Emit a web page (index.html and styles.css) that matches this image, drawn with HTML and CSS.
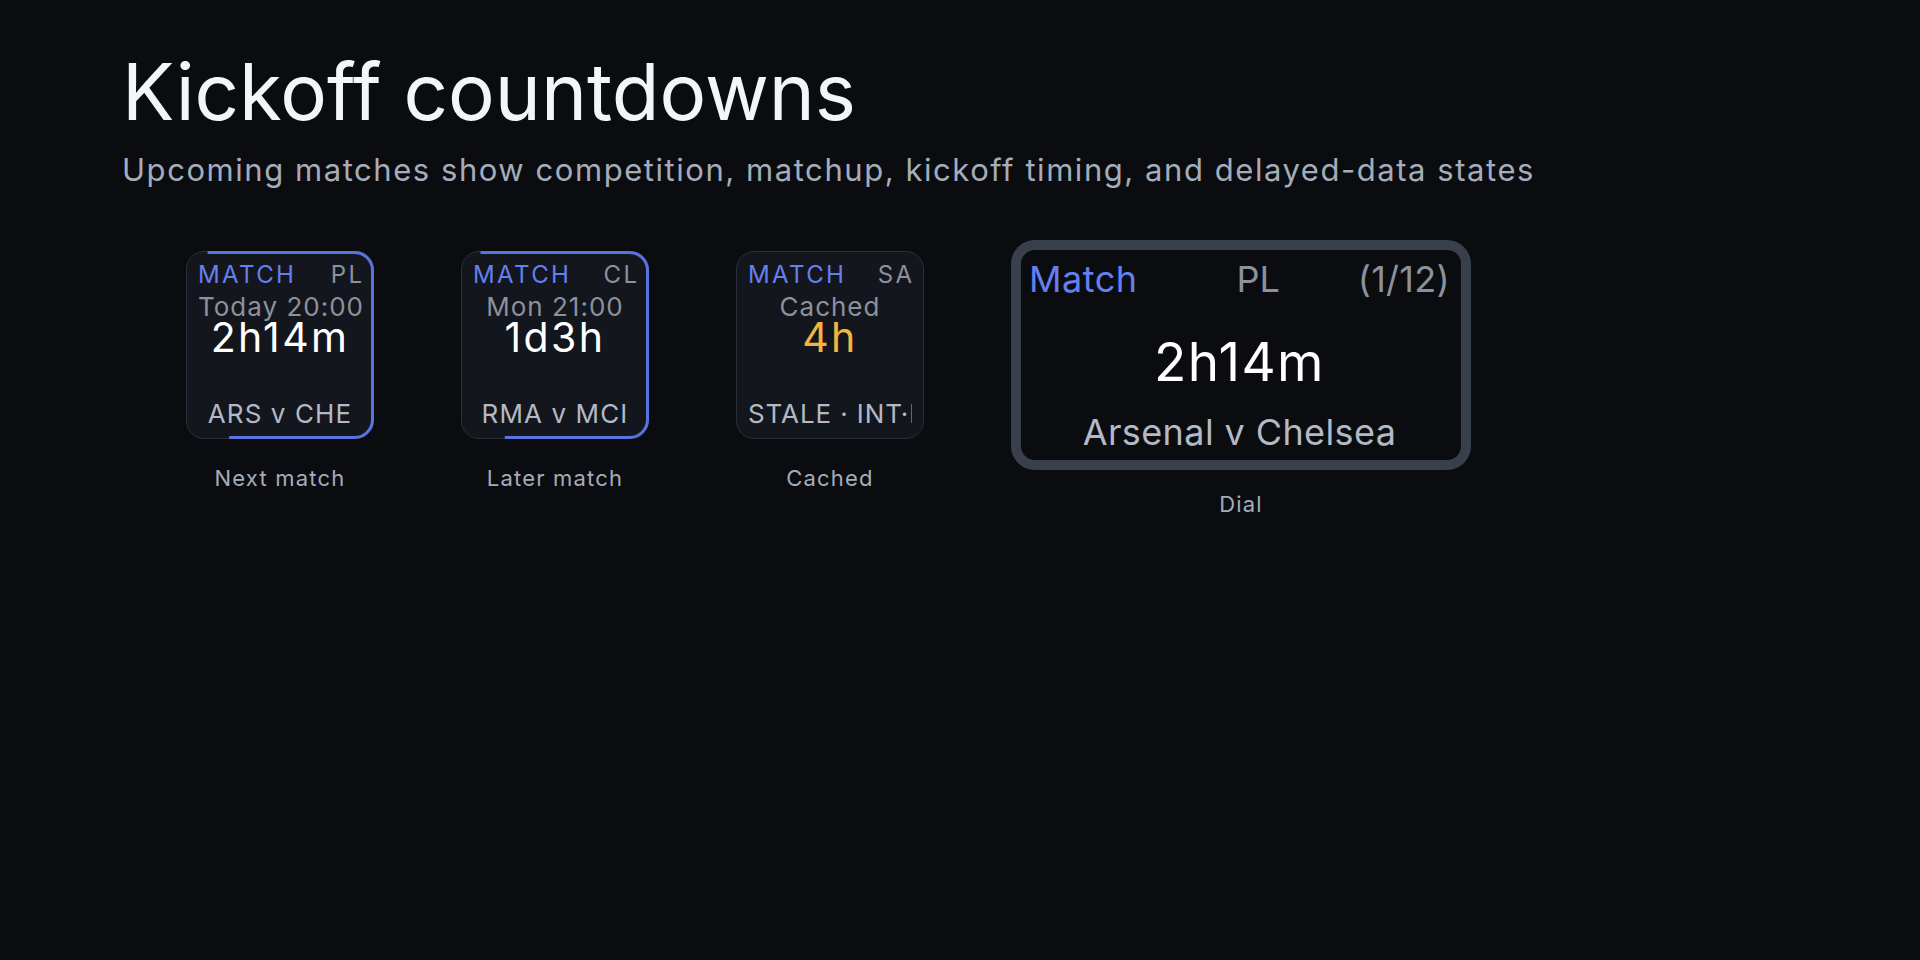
FILE: index.html
```html
<!DOCTYPE html>
<html lang="en">
<head>
    <meta charset="UTF-8">
    <meta name="viewport" content="width=device-width, initial-scale=1.0">
    <title>Kickoff countdowns</title>
    <link rel="stylesheet" href="styles.css">
</head>
<body>
    <main class="page">
        <header class="intro">
            <h1 class="intro-title">Kickoff countdowns</h1>
            <p class="intro-subtitle">Upcoming matches show competition, matchup, kickoff timing, and delayed-data states</p>
        </header>

        <section class="gallery">
            <!-- Tile: next match -->
            <figure class="sample sample-tile">
                <div class="tile">
                    <svg class="tile-progress" viewBox="0 0 188 188">
                        <rect x="1.5" y="1.5" width="185" height="185" rx="18" pathLength="100" stroke-dasharray="67.4 100" stroke-dashoffset="-0.3"/>
                    </svg>
                    <div class="tile-head">
                        <span class="tile-kind">MATCH</span>
                        <span class="tile-comp">PL</span>
                    </div>
                    <div class="tile-when">Today 20:00</div>
                    <div class="tile-count">2h14m</div>
                    <div class="tile-teams">ARS v CHE</div>
                </div>
                <figcaption class="sample-label">Next match</figcaption>
            </figure>

            <!-- Tile: later match -->
            <figure class="sample sample-tile">
                <div class="tile">
                    <svg class="tile-progress" viewBox="0 0 188 188">
                        <rect x="1.5" y="1.5" width="185" height="185" rx="18" pathLength="100" stroke-dasharray="67.6 100" stroke-dashoffset="0"/>
                    </svg>
                    <div class="tile-head">
                        <span class="tile-kind">MATCH</span>
                        <span class="tile-comp">CL</span>
                    </div>
                    <div class="tile-when">Mon 21:00</div>
                    <div class="tile-count">1d3h</div>
                    <div class="tile-teams">RMA v MCI</div>
                </div>
                <figcaption class="sample-label">Later match</figcaption>
            </figure>

            <!-- Tile: cached data -->
            <figure class="sample sample-tile">
                <div class="tile">
                    <div class="tile-head">
                        <span class="tile-kind">MATCH</span>
                        <span class="tile-comp">SA</span>
                    </div>
                    <div class="tile-when">Cached</div>
                    <div class="tile-count tile-count-stale">4h</div>
                    <div class="tile-teams tile-teams-clipped">STALE · INT·MIL</div>
                </div>
                <figcaption class="sample-label">Cached</figcaption>
            </figure>

            <!-- Dial -->
            <figure class="sample sample-dial">
                <div class="dial">
                    <div class="dial-head">
                        <span class="dial-kind">Match</span>
                        <span class="dial-comp">PL</span>
                        <span class="dial-page">(1/12)</span>
                    </div>
                    <div class="dial-count">2h14m</div>
                    <div class="dial-teams">Arsenal v Chelsea</div>
                </div>
                <figcaption class="sample-label">Dial</figcaption>
            </figure>
        </section>
    </main>
</body>
</html>
```

FILE: styles.css
```css
/* Base styles */
:root {
    --color-background: #0b0c10;
    --color-tile: #14161d;
    --color-tile-border: #2b2f39;
    --color-dial-border: #3a404b;
    --color-text-primary: #f4f5f7;
    --color-text-secondary: #a5acba;
    --color-text-muted: #8b919d;
    --color-text-teams: #b3b9c5;
    --color-accent: #6480f0;
    --color-progress: #5a73e2;
    --color-stale: #f2b53f;
    --font-primary: 'Inter', 'Noto Sans', 'Liberation Sans', sans-serif;
}

* {
    margin: 0;
    padding: 0;
    box-sizing: border-box;
}

body {
    font-family: var(--font-primary);
    background: var(--color-background);
    color: var(--color-text-primary);
    min-height: 100vh;
}

.page {
    padding: 53px 0 0 122px;
}

/* Heading */
.intro-title {
    font-size: 78px;
    line-height: 78px;
    font-weight: 400;
    color: var(--color-text-primary);
}

.intro-subtitle {
    margin-top: 23px;
    font-size: 31px;
    line-height: 31px;
    letter-spacing: 1.55px;
    color: var(--color-text-secondary);
}

/* Samples row */
.gallery {
    display: flex;
    align-items: flex-start;
    gap: 87px;
    margin-top: 55px;
    padding-left: 64px;
}

.sample {
    display: flex;
    flex-direction: column;
    align-items: center;
}

.sample-tile {
    padding-top: 11px;
}

.sample-label {
    font-size: 22px;
    line-height: 22px;
    letter-spacing: 1.2px;
    color: var(--color-text-secondary);
}

.sample-tile .sample-label {
    margin-top: 28px;
}

.sample-dial .sample-label {
    margin-top: 23px;
}

/* Small tile */
.tile {
    position: relative;
    width: 188px;
    height: 188px;
    display: flex;
    flex-direction: column;
    padding: 11px 11px 8px;
    background: var(--color-tile);
    border: 1px solid var(--color-tile-border);
    border-radius: 18px;
    text-align: center;
}

.tile-progress {
    position: absolute;
    top: -1px;
    left: -1px;
    width: 188px;
    height: 188px;
    fill: none;
    stroke: var(--color-progress);
    stroke-width: 3;
    pointer-events: none;
}

.tile-head {
    display: flex;
    justify-content: space-between;
    font-size: 24px;
    line-height: 24px;
    letter-spacing: 2.4px;
}

.tile-kind {
    color: var(--color-accent);
}

.tile-comp {
    margin-right: -2.4px;
    color: var(--color-text-muted);
}

.tile-when {
    margin-top: 8px;
    font-size: 26px;
    line-height: 24px;
    letter-spacing: 1px;
    color: var(--color-text-muted);
    white-space: nowrap;
}

.tile-count {
    font-size: 41px;
    line-height: 36px;
    letter-spacing: 2.4px;
    color: #ffffff;
}

.tile-count-stale {
    color: var(--color-stale);
}

.tile-teams {
    margin-top: auto;
    font-size: 26px;
    line-height: 32px;
    letter-spacing: 1.1px;
    color: var(--color-text-teams);
    white-space: nowrap;
}

.tile-teams-clipped {
    overflow: hidden;
    letter-spacing: 0.9px;
}

/* Dial */
.dial {
    width: 460px;
    height: 230px;
    display: flex;
    flex-direction: column;
    align-items: center;
    padding: 11px 11px 10px 8px;
    background: var(--color-background);
    border: 10px solid var(--color-dial-border);
    border-radius: 24px;
}

.dial-head {
    align-self: stretch;
    display: flex;
    justify-content: space-between;
    font-size: 36px;
    line-height: 36px;
}

.dial-kind {
    letter-spacing: 0.5px;
    color: var(--color-accent);
}

.dial-comp {
    margin-left: 21px;
    color: var(--color-text-muted);
}

.dial-page {
    letter-spacing: 0.3px;
    color: var(--color-text-muted);
}

.dial-count {
    margin-top: 39px;
    font-size: 53px;
    line-height: 53px;
    letter-spacing: 1.4px;
    color: #ffffff;
}

.dial-teams {
    margin-top: auto;
    font-size: 36px;
    line-height: 36px;
    letter-spacing: 0.4px;
    color: var(--color-text-teams);
    white-space: nowrap;
}
```
